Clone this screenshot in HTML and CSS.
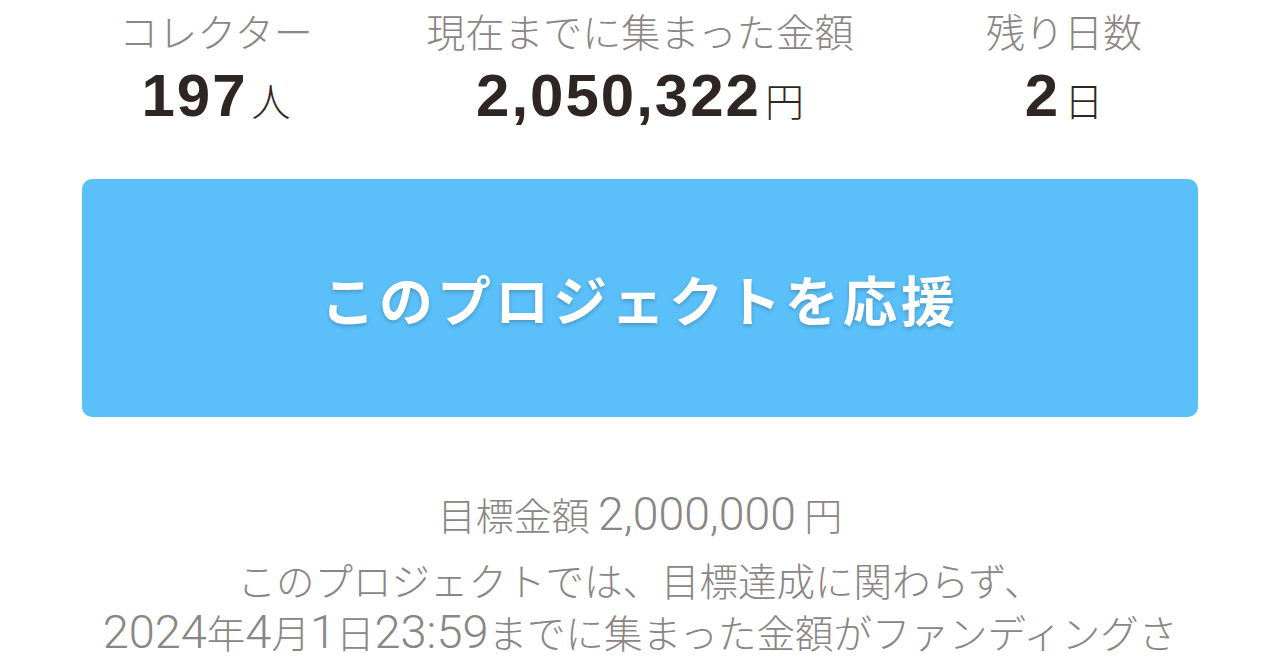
FILE: index.html
```html
<!DOCTYPE html>
<html lang="ja">
<head>
<meta charset="utf-8">
<link rel="stylesheet" href="styles.css">
</head>
<body>
<div class="page">
  <div class="stats">
    <div class="stat">
      <div class="label">コレクター</div>
      <div class="value"><span class="num">197</span><span class="unit">人</span></div>
    </div>
    <div class="stat">
      <div class="label">現在までに集まった金額</div>
      <div class="value"><span class="num">2,050,322</span><span class="unit">円</span></div>
    </div>
    <div class="stat">
      <div class="label">残り日数</div>
      <div class="value"><span class="num">2</span><span class="unit">日</span></div>
    </div>
  </div>
  <div class="cta">
    <a class="support-btn" href="#">このプロジェクトを応援</a>
  </div>
  <div class="info">
    <p class="goal">目標金額 <span class="n">2,000,000</span> 円</p>
    <p class="note">このプロジェクトでは、目標達成に関わらず、<br><span class="n">2024</span>年<span class="n">4</span>月<span class="n">1</span>日<span class="n">23:59</span>までに集まった金額がファンディングさ</p>
  </div>
</div>
</body>
</html>
```
FILE: styles.css
```css
html, body {
  margin: 0;
  padding: 0;
  background: #ffffff;
}
body {
  font-family: "Noto Sans CJK JP", "Noto Sans", sans-serif;
  overflow: hidden;
  height: 670px;
}
.page {
  width: 1280px;
}
.stats {
  display: grid;
  grid-template-columns: repeat(3, 424px);
  justify-content: center;
  padding-top: 4px;
}
.stat {
  display: flex;
  flex-direction: column;
  align-items: center;
}
.label {
  font-size: 39px;
  line-height: 52px;
  color: #8b8584;
  font-weight: 300;
  white-space: nowrap;
}
.value {
  display: flex;
  align-items: baseline;
  color: #2f2624;
  margin-top: 8px;
}
.num {
  font-family: "Liberation Sans", Arial, sans-serif;
  font-weight: 700;
  font-size: 60px;
  line-height: 64px;
  letter-spacing: 2px;
}
.unit {
  font-size: 39px;
  font-weight: 300;
  margin-left: 4px;
}
.cta {
  padding: 0 82px;
  margin-top: 51px;
}
.support-btn {
  display: flex;
  align-items: center;
  justify-content: center;
  height: 238px;
  background: #5bc0fa;
  border-radius: 10px;
  color: #ffffff;
  text-decoration: none;
  font-size: 54px;
  font-weight: 700;
  letter-spacing: 4px;
  text-shadow: 0 2px 4px rgba(0, 0, 0, 0.22);
}
.info {
  padding: 0 40px;
  margin-top: 72px;
  text-align: center;
  color: #8b8584;
  font-weight: 300;
}
.goal {
  margin: 0;
  font-size: 38px;
  line-height: 50px;
}
.note {
  margin: 14px 0 0;
  font-size: 38.5px;
  line-height: 52px;
  white-space: nowrap;
}
.n {
  font-family: Roboto, "Liberation Sans", sans-serif;
  font-weight: 300;
  font-size: 1.22em;
  line-height: 40px;
}
```
